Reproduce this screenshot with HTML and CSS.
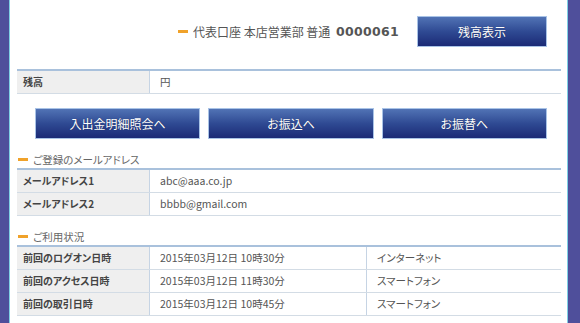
FILE: index.html
```html
<!DOCTYPE html>
<html lang="ja">
<head>
    <meta charset="UTF-8">
    <title>口座情報</title>
    <link rel="stylesheet" href="styles.css">
</head>
<body>
    <div class="frame">
        <div class="main">
            <div class="account-head">
                <span class="account-name"><span class="dash"></span>代表口座 本店営業部 普通 <b>0000061</b></span>
                <button class="btn btn-small">残高表示</button>
            </div>

            <table class="info">
                <tr><th>残高</th><td>円</td></tr>
            </table>

            <div class="actions">
                <button class="btn">入出金明細照会へ</button>
                <button class="btn">お振込へ</button>
                <button class="btn">お振替へ</button>
            </div>

            <h2 class="section"><span class="dash"></span>ご登録のメールアドレス</h2>
            <table class="info">
                <tr><th>メールアドレス1</th><td>abc@aaa.co.jp</td></tr>
                <tr><th>メールアドレス2</th><td>bbbb@gmail.com</td></tr>
            </table>

            <h2 class="section"><span class="dash"></span>ご利用状況</h2>
            <table class="info">
                <tr><th>前回のログオン日時</th><td class="date">2015年03月12日 10時30分</td><td>インターネット</td></tr>
                <tr><th>前回のアクセス日時</th><td class="date">2015年03月12日 11時30分</td><td>スマートフォン</td></tr>
                <tr><th>前回の取引日時</th><td class="date">2015年03月12日 10時45分</td><td>スマートフォン</td></tr>
            </table>
        </div>
    </div>
</body>
</html>
```

FILE: styles.css
```css
html, body {
    margin: 0;
    padding: 0;
    height: 100%;
}
body {
    font-family: "Noto Sans CJK JP", "Noto Sans", sans-serif;
    font-feature-settings: "palt";
    font-size: 10.5px;
    color: #555;
    background: #4f4f9b;
    padding: 0 12px 0 9px;
    box-sizing: border-box;
}
.frame {
    background: #fff;
    border-left: 1px solid #7fd0e4;
    border-right: 1px solid #7fd0e4;
    min-height: 100%;
    padding: 0 6px 0 7px;
}
.main {
    padding-top: 16px;
}
.dash {
    display: inline-block;
    width: 10px;
    height: 3px;
    background: #f0a22a;
    margin-right: 5px;
}
.account-head {
    display: flex;
    justify-content: flex-end;
    align-items: center;
    gap: 18px;
    padding-right: 14px;
    margin-bottom: 22px;
}
.account-name {
    display: flex;
    align-items: center;
    font-size: 12px;
    color: #555;
    white-space: pre;
}
.account-name b {
    font-family: "DejaVu Sans", sans-serif;
    font-size: 12.5px;
    letter-spacing: 0.3px;
    margin-left: 3px;
}
.btn {
    font-family: "Noto Sans CJK JP", sans-serif;
    font-feature-settings: "palt";
    font-size: 12px;
    color: #fff;
    border: 1px solid #a9c3e6;
    background: linear-gradient(to bottom, #5173b5 0%, #2f4a93 50%, #1b2a76 100%);
    height: 31px;
    padding: 0;
    cursor: pointer;
    text-shadow: 0 0 1px rgba(0, 0, 0, 0.4);
}
.btn-small {
    width: 130px;
}
.info {
    width: 100%;
    border-collapse: collapse;
    border-top: 2px solid #a9c1dc;
}
.info th, .info td {
    line-height: 22px;
    padding: 0 10px;
    border-bottom: 1px solid #d3dce5;
    text-align: left;
    font-weight: normal;
}
.info th {
    width: 116px;
    padding-left: 6px;
    background: #efefef;
    color: #444;
    font-size: 10px;
    font-weight: bold;
    border-right: 1px solid #c6d4e4;
}
.info td.date {
    width: 196px;
    border-right: 1px solid #c6d4e4;
}
.actions {
    display: flex;
    gap: 8px;
    padding: 0 14px 0 18px;
    margin: 14px 0 0;
}
.actions .btn {
    flex: 1;
}
.section {
    display: flex;
    align-items: center;
    height: 17px;
    font-size: 10.5px;
    font-weight: normal;
    color: #666;
    margin: 12px 0 0;
    padding-left: 1px;
}
```
